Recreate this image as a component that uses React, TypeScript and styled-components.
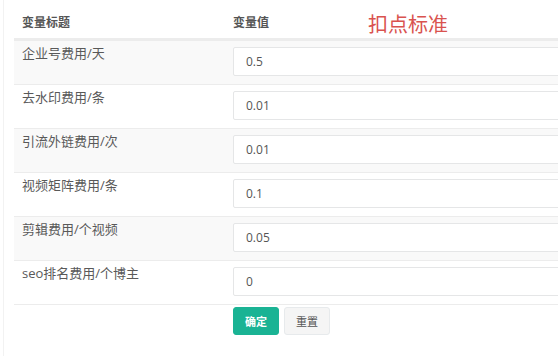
import styled, { createGlobalStyle } from 'styled-components';

const GlobalStyle = createGlobalStyle`
  html, body {
    margin: 0;
    padding: 0;
    background: #fff;
    overflow: hidden;
  }
  body {
    font-family: "Open Sans", "Noto Sans CJK SC", sans-serif;
    color: #676a6c;
  }
`;

const rows = [
  { label: '企业号费用/天', value: '0.5' },
  { label: '去水印费用/条', value: '0.01' },
  { label: '引流外链费用/次', value: '0.01' },
  { label: '视频矩阵费用/条', value: '0.1' },
  { label: '剪辑费用/个视频', value: '0.05' },
  { label: 'seo排名费用/个博主', value: '0' },
];

const Page = styled.div`
  width: 760px;
  height: 356px;
  padding-left: 10px;
  border-left: 1px solid #f2f2f2;
  margin-left: 3px;
  box-sizing: border-box;
`;

const Table = styled.div`
  display: flex;
  flex-direction: column;
  width: 100%;
`;

const HeaderRow = styled.div`
  display: grid;
  grid-template-columns: 211px 1fr;
  height: 40px;
  border-bottom: 2px solid #ececec;
  box-sizing: border-box;
`;

const HeadCell = styled.div`
  display: flex;
  align-items: center;
  padding: 5px 8px 0;
  font-size: 12px;
  font-weight: 700;
  color: #555;
`;

const Note = styled.span`
  margin-left: 99px;
  margin-top: 3px;
  font-size: 20px;
  font-weight: 400;
  color: #d9534f;
`;

const Row = styled.div<{ striped?: boolean }>`
  display: grid;
  grid-template-columns: 211px 1fr;
  height: 44px;
  box-sizing: border-box;
  border-top: 1px solid #ececec;
  background: ${p => (p.striped ? '#f9f9f9' : '#fff')};
`;

const Label = styled.div`
  padding: 3px 8px 0;
  font-size: 13px;
  line-height: 18px;
  color: #595959;
`;

const Cell = styled.div`
  padding: 6px 0 0 8px;
`;

const Input = styled.input`
  display: block;
  width: 100%;
  height: 29px;
  box-sizing: border-box;
  padding: 0 12px;
  border: 1px solid #e5e6e7;
  border-radius: 2px;
  background: #fff;
  font-family: "Open Sans", sans-serif;
  font-size: 12px;
  color: #555;
  outline: none;
`;

const Actions = styled.div`
  display: flex;
  gap: 5px;
  padding: 2px 0 0 219px;
  border-top: 1px solid #ececec;
`;

const Button = styled.button<{ primary?: boolean }>`
  height: 28px;
  padding: 0 11px;
  border-radius: 3px;
  font-family: "Noto Sans CJK SC", sans-serif;
  font-size: 11px;
  font-weight: ${p => (p.primary ? 700 : 400)};
  border: 1px solid ${p => (p.primary ? '#1ab394' : '#e7eaec')};
  background: ${p => (p.primary ? '#1ab394' : '#f5f5f5')};
  color: ${p => (p.primary ? '#fff' : '#555')};
  cursor: pointer;
`;

export default function App() {
  return (
    <>
      <GlobalStyle />
      <Page>
        <Table>
          <HeaderRow>
            <HeadCell>变量标题</HeadCell>
            <HeadCell>
              变量值<Note>扣点标准</Note>
            </HeadCell>
          </HeaderRow>
          {rows.map((r, i) => (
            <Row key={r.label} striped={i % 2 === 0}>
              <Label>{r.label}</Label>
              <Cell>
                <Input defaultValue={r.value} />
              </Cell>
            </Row>
          ))}
          <Actions>
            <Button primary>确定</Button>
            <Button>重置</Button>
          </Actions>
        </Table>
      </Page>
    </>
  );
}
